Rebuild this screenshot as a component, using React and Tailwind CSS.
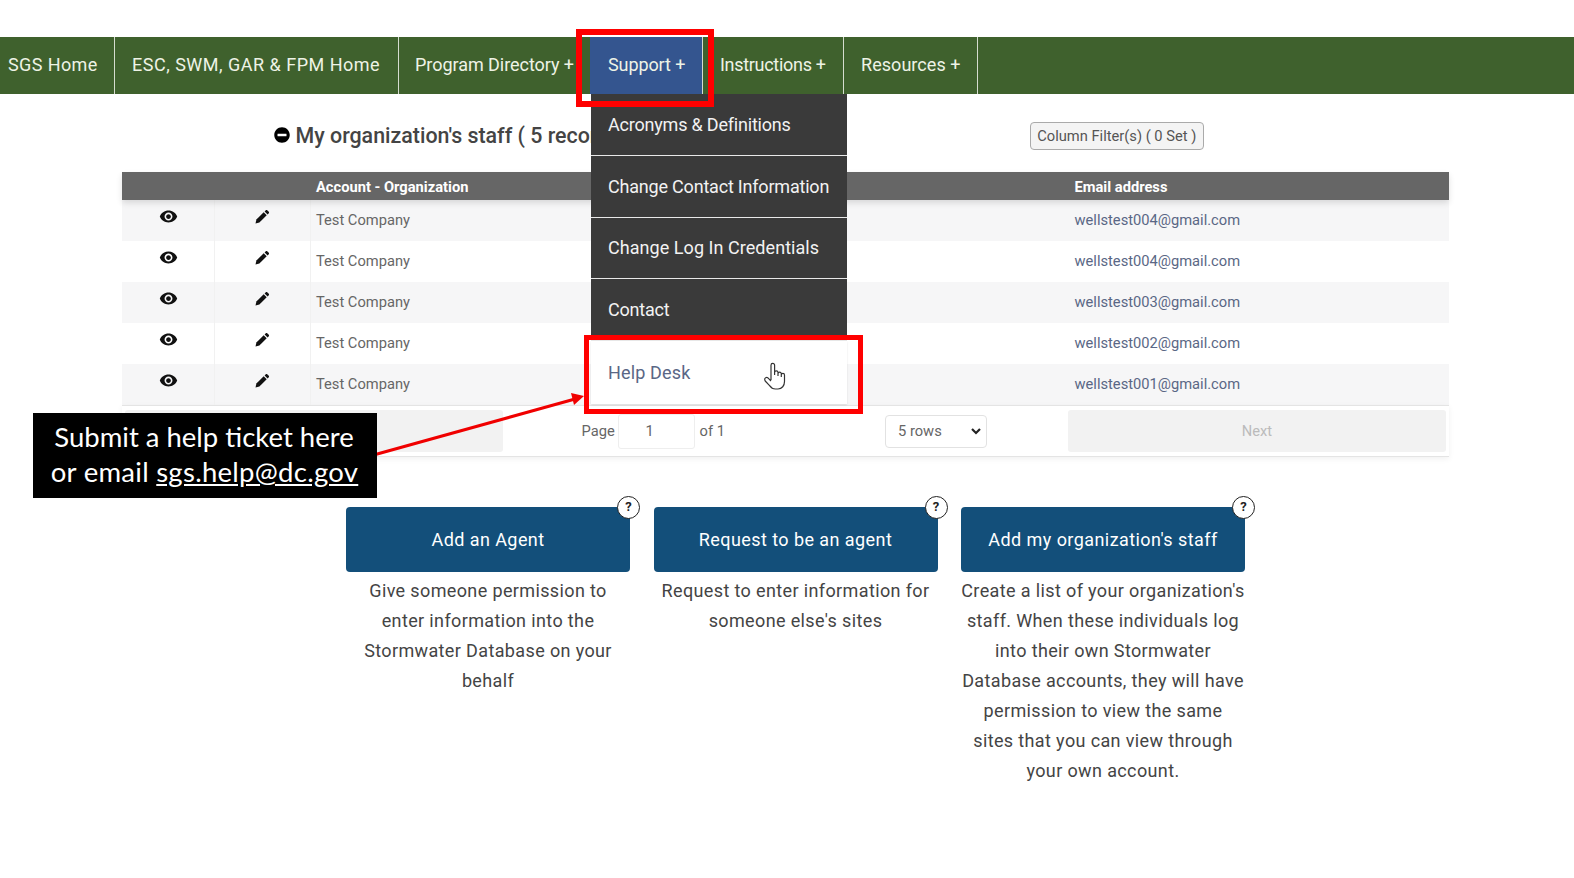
import React from "react";
import { FaMinusCircle } from "react-icons/fa";
import { MdVisibility } from "react-icons/md";

const navItems = [
  { label: "SGS Home", w: "w-[115px]", pad: "pl-2 tracking-[0.4px]" },
  { label: "ESC, SWM, GAR & FPM Home", w: "w-[284px]", pad: "pl-[17px] tracking-[0.5px]" },
  { label: "Program Directory +", w: "w-[191px]", pad: "pl-[16px] tracking-[-0.05px]", noBorder: true },
  { label: "Support +", w: "w-[113px]", pad: "pl-[18px] tracking-[-0.1px]", active: true },
  { label: "Instructions +", w: "w-[141px]", pad: "pl-[17px] tracking-[-0.3px]" },
  { label: "Resources +", w: "w-[134px]", pad: "pl-[17px] tracking-[0.05px]" },
];

const menu = [
  { label: "Acronyms & Definitions", t: "tracking-[-0.2px]" },
  { label: "Change Contact Information", t: "tracking-[-0.2px]" },
  { label: "Change Log In Credentials", t: "tracking-[0.05px]" },
  { label: "Contact", t: "tracking-[-0.2px]" },
];

const rows = [
  "wellstest004@gmail.com",
  "wellstest004@gmail.com",
  "wellstest003@gmail.com",
  "wellstest002@gmail.com",
  "wellstest001@gmail.com",
];

const cards = [
  {
    title: "Add an Agent",
    lines: ["Give someone permission to", "enter information into the", "Stormwater Database on your", "behalf"],
  },
  {
    title: "Request to be an agent",
    lines: ["Request to enter information for", "someone else's sites"],
  },
  {
    title: "Add my organization's staff",
    lines: [
      "Create a list of your organization's",
      "staff. When these individuals log",
      "into their own Stormwater",
      "Database accounts, they will have",
      "permission to view the same",
      "sites that you can view through",
      "your own account.",
    ],
  },
];

function Pencil() {
  return (
    <svg width="16" height="16" viewBox="0 0 16 16" className="text-[#111]">
      <path d="M1.5 14.5l.9-3.9 7.3-7.3 3 3-7.3 7.3z" fill="currentColor" />
      <path d="M10.6 2.4l1.2-1.2c.4-.4 1-.4 1.4 0l1.6 1.6c.4.4.4 1 0 1.4l-1.2 1.2z" fill="currentColor" />
    </svg>
  );
}

function Card({ title, lines }) {
  return (
    <div className="w-[284px]">
      <div className="relative">
        <button className="w-full h-[65px] rounded-[4px] bg-[#134f7a] text-white text-[18px] tracking-[0.43px]">{title}</button>
        <span className="absolute right-[-10px] top-[-11px] w-[23px] h-[23px] rounded-full bg-white border border-[#222] flex items-center justify-center text-[13px] font-bold text-[#222]">?</span>
      </div>
      <div className="mt-[4px] text-center text-[18px] leading-[30px] text-[#444] whitespace-nowrap tracking-[0.37px]">
        {lines.map((l) => (
          <div key={l}>{l}</div>
        ))}
      </div>
    </div>
  );
}

export default function App() {
  return (
    <div className="relative w-[1574px] h-[878px] overflow-hidden bg-white font-['Roboto',sans-serif]">
      <div className="h-[37px]" />
      <nav className="h-[57px] bg-[#3f612d] flex text-[18px] text-[#eef3e6]">
        {navItems.map((n) => (
          <div
            key={n.label}
            className={`${n.w} ${n.pad} h-full flex items-center whitespace-nowrap pb-[2px] ${n.noBorder ? "" : "border-r border-[#d5dccf]"} ${n.active ? "bg-[#34558f]" : ""}`}
          >
            {n.label}
          </div>
        ))}
      </nav>

      <main className="w-[1327.5px] ml-[121.5px]">
        <div className="h-[77.5px] flex items-center">
          <div className="ml-[152px] flex items-center gap-[6px] text-[21.4px] font-medium text-[#444] whitespace-nowrap w-[317px] mt-[7px]">
            <FaMinusCircle className="text-[16px] text-black shrink-0 -mt-[3px]" />
            <span>My organization's staff ( 5 records )</span>
          </div>
          <button className="ml-[439.5px] w-[173.5px] h-[28px] rounded-[4px] border border-[#aaa] bg-[#f4f4f4] text-[14.7px] text-[#555] mt-[6px] pt-[1px]">Column Filter(s) ( 0 Set )</button>
        </div>

        <div className="relative z-10 h-[28.5px] bg-[#666] flex items-center text-[14.7px] font-bold text-white shadow-[0_3px_6px_rgba(0,0,0,0.12)] pt-[2px]">
          <div className="ml-[194.5px] w-[758.5px]">Account - Organization</div>
          <div>Email address</div>
        </div>
        {rows.map((email, i) => (
          <div key={i} className={`h-[41px] flex items-center text-[14.7px] ${i % 2 === 0 ? "bg-[#f6f6f7]" : "bg-white"}`}>
            <div className="w-[93px] h-full flex justify-center items-start pt-[7px] border-r border-[#f1f1f1]">
              <MdVisibility className="text-[19px] text-[#111] ml-[1px]" />
            </div>
            <div className="w-[96.5px] h-full flex justify-center items-start pt-[9px] border-r border-[#f1f1f1]">
              <Pencil />
            </div>
            <div className="ml-[5px] w-[758.5px] text-[#666]">Test Company</div>
            <div className="text-[#5a6785]">{email}</div>
          </div>
        ))}
        <div className="h-[52px] border-y border-[#e4e4e4] shadow-[0_2px_6px_rgba(0,0,0,0.06)] flex items-center text-[14.7px] text-[#666]">
          <div className="ml-[3px] w-[378px] h-[42px] bg-[#f2f2f2] rounded-[3px] shrink-0" />
          <div className="ml-[79px] w-[32px] shrink-0 whitespace-nowrap">Page</div>
          <div className="ml-[4px] w-[77px] h-[35px] border border-[#eee] rounded-[3px] bg-white flex items-center pl-[27px] shrink-0">1</div>
          <div className="ml-[5px] w-[30px] whitespace-nowrap shrink-0">of 1</div>
          <div className="ml-[155.5px] w-[102px] h-[33px] border border-[#e2e2e2] rounded-[4px] bg-white flex items-center justify-between pl-[12px] pr-[4px] shrink-0">
            <span>5 rows</span>
            <svg width="12" height="12" viewBox="0 0 12 12"><path d="M2 4l4 4 4-4" fill="none" stroke="#222" strokeWidth="2.2" /></svg>
          </div>
          <div className="ml-[81px] w-[378px] h-[42px] bg-[#f2f2f2] rounded-[3px] flex items-center justify-center text-[#bbb] shrink-0">Next</div>
        </div>
      </main>

      <section className="mt-[49.5px] ml-[346px] flex gap-[23.5px] items-start">
        {cards.map((c) => (
          <Card key={c.title} {...c} />
        ))}
      </section>

      {/* Dropdown menu */}
      <div className="absolute z-20 left-[591px] top-[94px] w-[256px] text-[18px]">
        {menu.map((m) => (
          <div key={m.label} className={`h-[61.75px] bg-[#3a3a3a] border-b border-[#e8e8e8] last:border-b-0 text-[#f2f2f2] flex items-center pl-[17px] whitespace-nowrap ${m.t}`}>{m.label}</div>
        ))}
        <div className="h-[62.5px] bg-white shadow-[0_1px_2px_rgba(0,0,0,0.1)] text-[#5a6785] flex items-center pl-[17px] tracking-[0.15px]">Help Desk</div>
      </div>

      {/* Annotations */}
      <div className="absolute z-30 left-[576px] top-[29px] w-[138px] h-[77.5px] border-[6px] border-[#ff0000]" />
      <div className="absolute z-30 left-[584px] top-[335px] w-[279px] h-[78.5px] border-[5px] border-[#ff0000]" />

      <svg className="absolute z-30 left-[360px] top-[385px]" width="240" height="85" viewBox="0 0 240 85">
        <line x1="10" y1="71" x2="215" y2="14" stroke="#f00000" strokeWidth="3" />
        <polygon points="224,11 211,8 214,20" fill="#f00000" />
      </svg>

      <div className="absolute z-30 left-[33px] top-[412.5px] w-[344px] h-[85px] bg-black text-white text-[27.5px] leading-[35.5px] text-center font-['Lato',sans-serif] pt-[6px] whitespace-nowrap">
        <div className="-ml-[2px]">Submit a help ticket here</div>
        <div className="tracking-[0.28px] -ml-[1px]">or email <span className="underline">sgs.help@dc.gov</span></div>
      </div>

      <svg className="absolute z-30 left-[762px] top-[361px]" width="26" height="30" viewBox="0 0 26 30">
        <path d="M9 19V4.2a1.8 1.8 0 0 1 3.6 0V14m0-2.5a1.7 1.7 0 0 1 3.4 0V15m0-2.5a1.7 1.7 0 0 1 3.3 0V16m0-2a1.6 1.6 0 0 1 3.2 0v6.5c0 4-2.5 7.5-6.5 7.5h-2.6c-2.6 0-4.4-1.2-5.8-3.3L3.2 20c-.9-1.5-.5-2.8.5-3.3s2.2-.1 3 1L9 20" fill="#fff" stroke="#333" strokeWidth="1.2" strokeLinejoin="round" />
      </svg>
    </div>
  );
}
